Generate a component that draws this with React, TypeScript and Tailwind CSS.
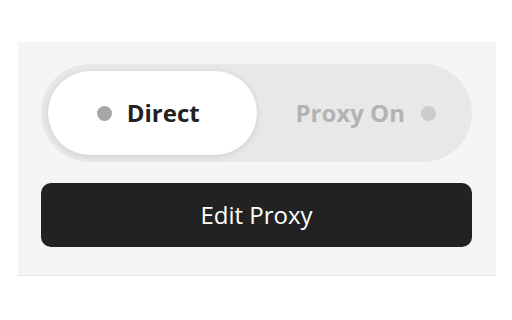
export default function App() {
  return (
    <div className="w-[512px] h-[320px] bg-white overflow-hidden" style={{ fontFamily: '"Open Sans", "Noto Sans", sans-serif' }}>
      <div className="ml-[18px] mt-[42px] w-[478px] bg-[#f5f5f5] border-b border-[#e4e4e4] pt-[22px] pl-[23px] pr-[24px] pb-[28px]">
        <div className="h-[98px] rounded-full bg-[#e8e8e8] p-[7px] flex">
          <div className="w-1/2 h-full rounded-full bg-white shadow-[0_1px_6px_rgba(0,0,0,0.12)] flex items-center justify-center gap-[15px] pr-[8px]">
            <span className="w-[15px] h-[15px] rounded-full bg-[#a6a6a6]" />
            <span className="text-[24px] font-bold text-[#222222] leading-none">Direct</span>
          </div>
          <div className="w-1/2 h-full flex items-center justify-center gap-[16px] pl-[10px]">
            <span className="text-[24px] font-bold text-[#b3b3b3] leading-none">Proxy On</span>
            <span className="w-[15px] h-[15px] rounded-full bg-[#cccccc]" />
          </div>
        </div>
        <button className="mt-[21px] w-full h-[64px] rounded-[10px] bg-[#222222] text-white text-[24px] leading-none flex items-center justify-center">
          Edit Proxy
        </button>
      </div>
    </div>
  );
}
